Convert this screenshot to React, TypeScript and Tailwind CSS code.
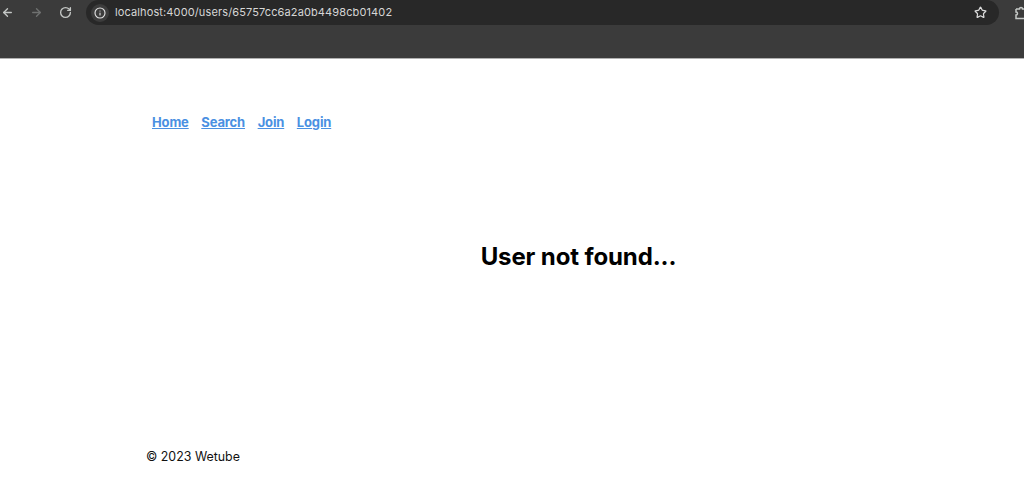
import { ArrowLeft, ArrowRight, Info, RotateCw, Star } from "lucide-react";

const App = () => {
    return (
        <div className="w-[1024px] h-[487px] bg-white overflow-hidden font-['Inter',sans-serif]">
            <header className="h-[59px] bg-[#3b3b3b] border-b border-[#b0b0b0]">
                <div className="h-[25px] flex items-center overflow-hidden">
                    <ArrowLeft size={13} strokeWidth={2.5} className="ml-[1px] shrink-0 text-[#c4c7c5]" />
                    <ArrowRight size={13} strokeWidth={2.5} className="ml-[16px] shrink-0 text-[#6f7170]" />
                    <RotateCw size={13} strokeWidth={2.5} className="ml-[16px] shrink-0 text-[#c4c7c5]" />
                    <div className="ml-[14px] w-[913px] shrink-0 h-[25px] rounded-full bg-[#282828] flex items-center pl-[5px] pr-[12px]">
                        <div className="w-[18px] h-[18px] rounded-full bg-[#3c3c3c] flex items-center justify-center">
                            <Info size={12} strokeWidth={2.25} className="text-[#e3e3e3]" />
                        </div>
                        <span className="ml-[6px] text-[11px] tracking-[0.12px] text-[#d6d6d6]">
                            localhost:4000/users/65757cc6a2a0b4498cb01402
                        </span>
                        <Star size={13} strokeWidth={2.25} className="ml-auto text-[#dcdcdc]" />
                    </div>
                    <svg width="14" height="14" viewBox="0 0 14 14" fill="none" stroke="#c4c7c5" strokeWidth="1.5" className="ml-[16px] shrink-0">
                        <path d="M1 3h3.5a1.5 1.5 0 0 1 3 0H14M1 3v3a1.5 1.5 0 0 1 0 3v3.5h13" />
                    </svg>
                </div>
            </header>
            <main className="flex flex-col w-[865px] ml-[146px]">
                <nav className="h-[34px] mt-[47px] pl-[6px] flex items-center gap-[12.6px] text-[13px] tracking-[-0.15px] font-bold text-[#4a90e2]">
                    <a href="#" className="underline">Home</a>
                    <a href="#" className="underline">Search</a>
                    <a href="#" className="underline">Join</a>
                    <a href="#" className="underline">Login</a>
                </nav>
                <h1 className="mt-[101px] text-center text-[24px] tracking-[-0.12px] leading-[32px] font-bold text-black">User not found...</h1>
                <footer className="mt-[176px] text-[12.4px] leading-[16px] text-[#111111]">&copy; 2023 Wetube</footer>
            </main>
        </div>
    );
};

export default App;
